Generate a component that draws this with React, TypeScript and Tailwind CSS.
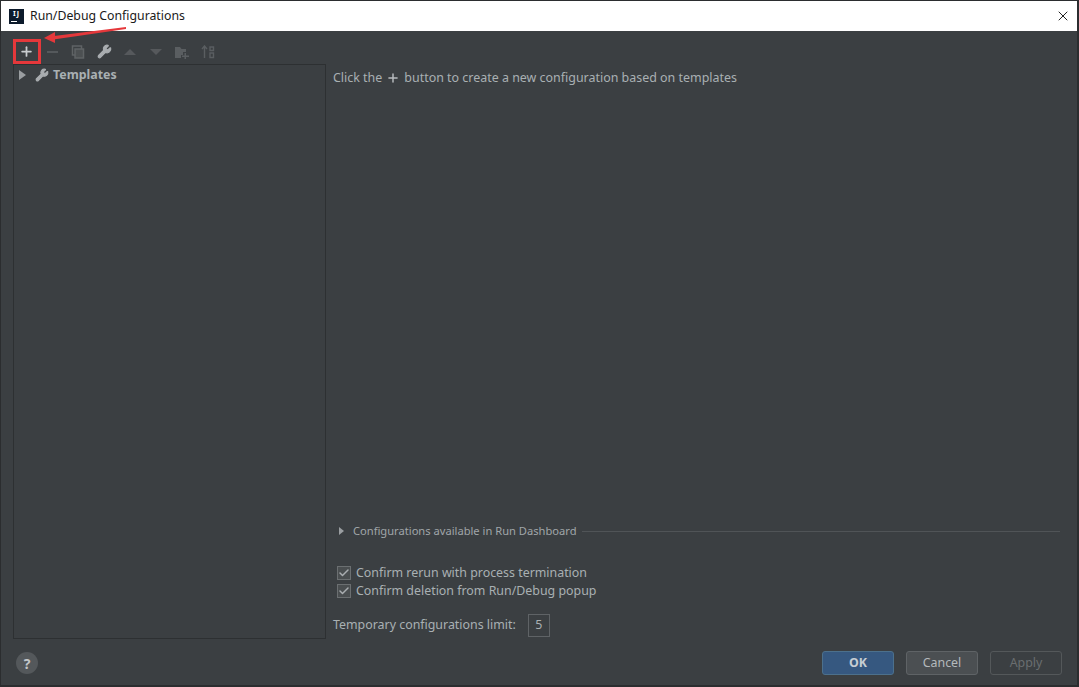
import { Check, Plus, Wrench, X } from "lucide-react";

const font = "font-['Noto_Sans','Open_Sans',sans-serif]";

function ToolbarIcons() {
  return (
    <div className="h-[33px] pt-[8px] pl-[12px] flex items-center relative">
      {/* add button, highlighted */}
      <div className="w-[28px] h-[25px] pr-[2px] border-[3px] border-[#e5383b] flex items-center justify-center">
        <Plus className="w-[15px] h-[15px] text-[#c9cdd0]" strokeWidth={2.8} />
      </div>
      <div className="w-[26px] -ml-[2px] flex justify-center">
        <div className="w-[11px] h-[2px] bg-[#55595c]" />
      </div>
      <div className="w-[26px] flex justify-center">
        <svg width="14" height="14" viewBox="0 0 14 14" fill="none" stroke="#5f6365" strokeWidth="1.5">
          <rect x="1.5" y="1" width="9" height="9" />
          <rect x="4" y="4" width="8.5" height="9" fill="#4c5052" />
        </svg>
      </div>
      <div className="w-[26px] flex justify-center">
        <Wrench className="w-[15px] h-[15px] text-[#a9adb0] fill-[#a9adb0]" />
      </div>
      <div className="w-[26px] flex justify-center">
        <div className="w-0 h-0 border-x-[6px] border-x-transparent border-b-[6px] border-b-[#56595c]" />
      </div>
      <div className="w-[26px] flex justify-center">
        <div className="w-0 h-0 border-x-[6px] border-x-transparent border-t-[6px] border-t-[#56595c]" />
      </div>
      <div className="w-[26px] flex justify-center">
        <svg width="15" height="14" viewBox="0 0 15 14" fill="#5a5e61">
          <path d="M0 2h5l1.500 2H11v3H8v3H6v3H0z" />
          <path d="M11 8v2.500h3V12h-3v2H9.500v-2H7v-1.500h2.500V8z" />
        </svg>
      </div>
      <div className="w-[26px] flex justify-center">
        <svg width="14" height="14" viewBox="0 0 14 14" fill="none" stroke="#5a5e61" strokeWidth="1.4">
          <path d="M3.500 13V1.500M1 4l2.500-3L6 4" />
          <path d="M9 2h3.500v3.500H9zM9 8h3.500v4.500H9z" />
        </svg>
      </div>
      {/* red annotation arrow */}
      <svg className="absolute left-[39px] top-[-5px] pointer-events-none" width="90" height="20" viewBox="0 0 90 20">
        <path d="M6 11 L86 1 L86 3 L10 14 Z" fill="#e5383b" />
        <path d="M4 12 L15 6 L15 17 Z" fill="#e5383b" />
      </svg>
    </div>
  );
}

function CheckRow({ label }: { label: string }) {
  return (
    <div className="h-[18px] flex items-center">
      <div className="w-[14px] h-[14px] ml-[4px] mr-[5px] bg-[#4a4e50] border border-[#6b6f71] flex items-center justify-center">
        <Check className="w-[12px] h-[12px] text-[#a9adb0]" strokeWidth={3} />
      </div>
      <span className="text-[12.400px] text-[#a9b0b3]">{label}</span>
    </div>
  );
}

export default function App() {
  return (
    <div className={`w-[1079px] h-[687px] overflow-hidden flex flex-col bg-[#3b3f42] border-t border-l border-r-2 border-b-2 border-[#2b2d2f] ${font}`}>
      {/* title bar */}
      <div className="h-[30px] shrink-0 bg-white flex items-center pl-[8px] pr-[6px]">
        <div className="w-[15px] h-[15px] bg-[#0c1a2b] relative flex items-start justify-center">
          <span className="mt-[1px] text-[7px] leading-[8px] tracking-[1px] font-bold text-white">IJ</span>
          <div className="absolute left-[2px] bottom-[2px] w-[6px] h-px bg-white" />
        </div>
        <span className="ml-[6px] text-[12.300px] text-[#1a1a1a]">Run/Debug Configurations</span>
        <X className="ml-auto w-[16px] h-[16px] text-[#222]" strokeWidth={1.500} />
      </div>

      <ToolbarIcons />

      {/* main area */}
      <div className="flex-1 min-h-0 flex pl-[12px] pr-[17px]">
        <div className="w-[313px] shrink-0 border border-[#2d3032] pt-[2px]">
          <div className="flex items-center h-[16px]">
            <div className="ml-[5px] w-0 h-0 border-y-[5px] border-y-transparent border-l-[7px] border-l-[#9a9ea1]" />
            <Wrench className="ml-[9px] w-[14px] h-[14px] text-[#a9adb0] fill-[#a9adb0]" />
            <span className="ml-[4px] text-[12.400px] font-bold text-[#a9b0b3]">Templates</span>
          </div>
        </div>

        <div className="flex-1 min-w-0 flex flex-col pl-[7px]">
          <div className="flex items-center h-[16px] mt-[6px] text-[12.450px] text-[#a9b0b3]">
            Click the
            <Plus className="mx-[4px] w-[14px] h-[14px] text-[#b8bcbf]" strokeWidth={2.500} />
            button to create a new configuration based on templates
          </div>

          <div className="mt-auto flex items-center h-[16px] pl-[6px]">
            <div className="w-0 h-0 border-y-[4px] border-y-transparent border-l-[5px] border-l-[#9a9ea1]" />
            <span className="ml-[9px] text-[11.150px] text-[#a0a6a9]">Configurations available in Run Dashboard</span>
            <div className="ml-[6px] flex-1 h-px bg-[#505457]" />
          </div>

          <div className="mt-[25px] flex flex-col">
            <CheckRow label="Confirm rerun with process termination" />
            <CheckRow label="Confirm deletion from Run/Debug popup" />
          </div>

          <div className="mt-[14px] mb-[2px] flex items-center">
            <span className="text-[12.400px] text-[#a9b0b3]">Temporary configurations limit:</span>
            <div className="ml-[12px] w-[22px] h-[23px] border border-[#5f6366] flex items-center justify-center text-[12.400px] text-[#a9b0b3]">
              5
            </div>
          </div>
        </div>
      </div>

      {/* footer */}
      <div className="h-[46px] shrink-0 flex items-center pt-[2px] pl-[15px] pr-[15px]">
        <div className="w-[22px] h-[22px] rounded-full bg-[#54585b] flex items-center justify-center text-[14px] font-bold text-[#c3c7ca]">
          ?
        </div>
        <div className="ml-auto flex gap-[12px] text-[12.400px]">
          <div className="w-[72px] h-[24px] rounded-[3px] bg-[#365880] border border-[#4c708c] flex items-center justify-center font-bold text-[#c6cdd3]">
            OK
          </div>
          <div className="w-[72px] h-[24px] rounded-[3px] bg-[#4b4f52] border border-[#5f6366] flex items-center justify-center text-[#b4b9bc]">
            Cancel
          </div>
          <div className="w-[72px] h-[24px] rounded-[3px] border border-[#54585a] flex items-center justify-center text-[#6a6e70]">
            Apply
          </div>
        </div>
      </div>
    </div>
  );
}
